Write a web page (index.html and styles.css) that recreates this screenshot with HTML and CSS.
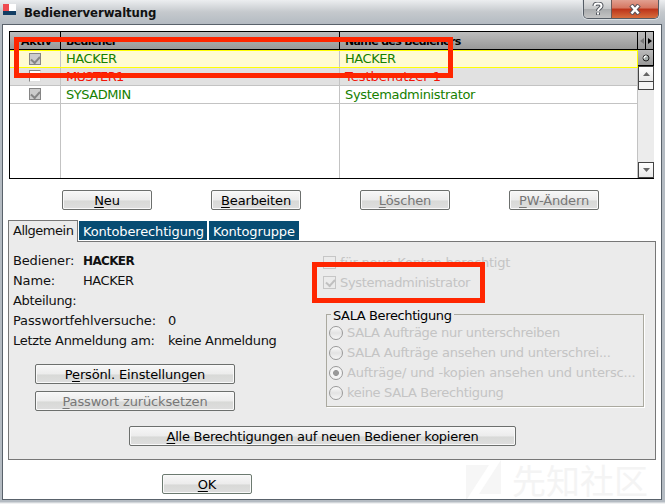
FILE: index.html
```html
<!DOCTYPE html>
<html lang="de">
<head>
<meta charset="utf-8">
<title>Bedienerverwaltung</title>
<link rel="stylesheet" href="styles.css">
</head>
<body>
<div class="window">
  <header class="titlebar">
    <svg class="logo" width="13" height="11"><path fill="#ef4b50" d="M0 0h6v7H0z"/><path fill="#fff" d="M6 0h7v7H6z"/><path fill="#123d63" d="M0 7h13v4H0z"/></svg>
    <h1>Bedienerverwaltung</h1>
    <div class="controls">
      <span class="help"><svg width="12" height="14" fill="none"><path d="M2.5 4C2.5 .8 9.5 .8 9.5 4c0 2.4-3.5 2.2-3.5 5M6 10.5v2.5" stroke="#555960" stroke-width="4"/><path d="M2.5 4C2.5 .8 9.5 .8 9.5 4c0 2.4-3.5 2.2-3.5 5M6 10.5v2" stroke="#fff" stroke-width="2"/></svg></span>
      <span class="close"><svg width="12" height="11" fill="none"><path d="M2 1l8 9M10 1L2 10" stroke="#5b5358" stroke-width="4.6"/><path d="M2.5 1.5l7 8M9.5 1.5l-7 8" stroke="#fff" stroke-width="2.5"/></svg></span>
    </div>
  </header>
  <main class="client">
    <section class="table">
      <div class="grid">
        <div class="row head"><span>Aktiv</span><span>Bediener</span><span>Name des Bedieners</span></div>
        <div class="row selected"><span><i class="tick on"></i></span><span>HACKER</span><span>HACKER</span></div>
        <div class="row alt"><span><i class="tick"></i></span><span class="tight">MUSTER1</span><span class="loose">Testbenutzer 1</span></div>
        <div class="row"><span><i class="tick on"></i></span><span>SYSADMIN</span><span class="sy">Systemadministrator</span></div>
        <div class="row rest"><span></span><span></span><span></span></div>
      </div>
      <div class="side">
        <div class="pager"><span><svg width="4" height="6"><path d="M4 0v6L0 3z" fill="#777"/></svg></span><span><svg width="4" height="6"><path d="M0 0v6l4-3z" fill="#000"/></svg></span></div>
        <div class="knob"><svg width="8" height="8"><circle cx="4" cy="4" r="3" fill="#a5adab" stroke="#222"/><path d="M2 4.5Q2 2 4.5 2" stroke="#fff" fill="none" stroke-width="1.3"/></svg></div>
        <div class="arrow"><svg width="7" height="4"><path d="M0 4h7L3.5 0z" fill="#666"/></svg></div>
        <div class="thumb"></div>
        <div class="track"></div>
        <div class="arrow"><svg width="7" height="4"><path d="M0 0h7L3.5 4z" fill="#666"/></svg></div>
      </div>
    </section>
    <div class="actions">
      <button><span><u>N</u>eu</span></button>
      <button><span><u>B</u>earbeiten</span></button>
      <button class="off"><span><u>L</u>öschen</span></button>
      <button class="off"><span><u>P</u>W-Ändern</span></button>
    </div>
    <nav class="tabs"><span class="tab active">Allgemein</span><span class="tab t2">Kontoberechtigung</span><span class="tab t3">Kontogruppe</span></nav>
    <section class="panel">
      <div class="cols">
        <div class="left">
          <dl>
            <div><dt>Bediener:</dt><dd class="strong">HACKER</dd></div>
            <div><dt>Name:</dt><dd class="name">HACKER</dd></div>
            <div><dt class="ab">Abteilung:</dt><dd></dd></div>
            <div class="wide"><dt>Passwortfehlversuche:</dt><dd>0</dd></div>
            <div class="wide"><dt class="la">Letzte Anmeldung am:</dt><dd class="ka">keine Anmeldung</dd></div>
          </dl>
          <button class="big"><span>P<u>e</u>rsönl. Einstellungen</span></button>
          <button class="big off"><span><u>P</u>asswort zurücksetzen</span></button>
        </div>
        <div class="right">
          <div class="check"><i class="box"></i><span class="fn">für neue Konten berechtigt</span></div>
          <div class="check"><i class="box on"></i><span class="sy">Systemadministrator</span></div>
          <fieldset>
            <legend>SALA Berechtigung</legend>
            <div class="radios">
              <div class="radio"><i></i><span class="r1">SALA Aufträge nur unterschreiben</span></div>
              <div class="radio"><i></i><span class="r2">SALA Aufträge ansehen und unterschrei...</span></div>
              <div class="radio"><i class="on"></i><span>Aufträge/ und -kopien ansehen und untersc...</span></div>
              <div class="radio"><i></i><span class="r4">keine SALA Berechtigung</span></div>
            </div>
          </fieldset>
        </div>
      </div>
      <button class="copy"><span><u>A</u>lle Berechtigungen auf neuen Bediener kopieren</span></button>
    </section>
    <button class="ok"><span><u>O</u>K</span></button>
  </main>
  <div class="mark mark-row"></div>
  <div class="mark mark-admin"></div>
  <div class="watermark"><svg width="36" height="40"><path fill="#f6f6f6" d="M0 5h23L1 39H0zM35 0v34H13z"/></svg><span>先知社区</span></div>
</div>
</body>
</html>
```
FILE: styles.css
```css
* { box-sizing: border-box; }
body { margin: 0; font: 13px/18px "DejaVu Sans", sans-serif; color: #111; letter-spacing: -0.15px; }
span, dt, dd, legend { white-space: nowrap; }
svg { display: block; }
.window { position: relative; width: 665px; height: 504px; overflow: hidden; padding: 0 3px 4px 2px; background: linear-gradient(#eceef0, #c5c9cd 12px, #b4bbc2 24px, #b4bbc2 502px, #f0f1f2 503px); }
.titlebar { height: 24px; display: flex; align-items: flex-start; }
.logo { margin-top: 4px; margin-left: 1px; }
h1 { margin: 4px 0 0 8px; font: bold 13px/17px "DejaVu Sans Condensed", "DejaVu Sans", sans-serif; letter-spacing: -0.08px; }
.controls { margin: 0 3px 0 auto; display: flex; width: 76px; height: 19px; border: 1px solid #555c65; border-top: 0; border-radius: 0 0 5px 5px; overflow: hidden; box-shadow: 0 0 0 1px #d9dde1; }
.controls span { display: flex; justify-content: center; align-items: center; }
.help { width: 28px; background: linear-gradient(#e3e3e3, #c4c6c8 50%, #aaacae 52%, #c4c4c4); border-right: 1px solid #6d5a58; }
.close { flex: 1; background: linear-gradient(#e1a090, #d57660 45%, #bc3319 50%, #d76d3d); }
.client { height: 476px; border: 1px solid #59626b; background: #fff; padding: 6px 7px 0 5px; }
.table { display: flex; width: 645px; height: 148px; margin-left: 1px; border: solid #000; border-width: 1px 0 1px 1px; }
.grid { width: 628px; display: flex; flex-direction: column; }
.row { height: 18px; display: grid; grid-template-columns: 51px 279px 298px; line-height: 17px; color: #168000; border-bottom: 1px solid #c3c3c3; letter-spacing: -0.45px; }
.row > span { border-right: 1px solid #c3c3c3; padding-left: 5px; overflow: hidden; }
.row > span:first-child { padding-left: 19px; padding-top: 2px; }
.row.head { background: linear-gradient(#bdbdbd, #999); border-color: #000; color: #000; font: bold 11px/19px "DejaVu Sans", sans-serif; letter-spacing: -0.65px; }
.row.head > span { border-color: #000; }
.row.head > span:first-child { padding: 0 0 0 11px; letter-spacing: -0.3px; }
.row.selected { background: #fffbd1; border: solid #ff0; border-width: 1px 0; line-height: 16px; }
.row.selected > span:first-child { padding-top: 2px; }
.row.selected > span:last-child { border-color: #ff0; }
.row.alt { background: #e1e1e1; color: #f21207; }
.row.rest { flex: 1; border: 0; }
.row .tight { letter-spacing: -0.7px; }
.row .loose { letter-spacing: 0; }
.tick { display: block; width: 12px; height: 12px; background: #fff; border: 1px solid #858585; border-right-color: #ddd; border-bottom-color: #ddd; }
.tick.on { background: #ccc; border-color: #858585; }
.tick.on::after, .box.on::after { content: ""; display: block; width: 7px; height: 4px; margin: 2px 0 0 1px; border: solid #858585; border-width: 0 0 2px 2px; transform: rotate(-48deg); }
.side { width: 16px; display: flex; flex-direction: column; }
.pager { height: 18px; display: flex; background: linear-gradient(#bdbdbd, #999); border-bottom: 1px solid #000; }
.pager span { width: 8px; display: flex; align-items: center; justify-content: center; border-right: 1px solid #000; }
.knob { height: 16px; display: flex; align-items: center; justify-content: center; background: linear-gradient(#bbb, #999); border: solid #000; border-width: 0 1px 1px 0; }
.arrow { height: 16px; display: flex; align-items: center; justify-content: center; background: linear-gradient(#fff, #e8e8e8); border: 1px solid #444; }
.thumb { height: 8px; background: #f5f5f5; border: solid #444; border-width: 0 1px 1px; }
.track { flex: 1; background: #ececec; }
button { display: flex; align-items: center; justify-content: center; width: 90px; height: 20px; padding: 0; border: 1px solid #6c6f6d; border-radius: 2px; background: linear-gradient(#f7f7f7, #ececec 50%, #d8d9d7 55%, #dedede); box-shadow: inset 0 0 0 1px #f9f9f9; font: inherit; letter-spacing: inherit; color: #000; }
button span { position: relative; top: 1px; }
button.off { color: #777; }
u { text-decoration-thickness: 1px; text-underline-offset: 2px; }
.actions { display: flex; gap: 59px; margin: 11px 0 0 54px; }
.actions button { flex-shrink: 0; }
.tabs { display: flex; align-items: flex-end; height: 31px; position: relative; }
.tab { height: 19px; margin-bottom: 1px; background: #074c73; color: #fff; line-height: 22px; padding-left: 4px; }
.tab.active { width: 70px; height: 22px; margin: 0 1px -1px 0; border: 1px solid #777; border-bottom: 0; background: #ebebeb; color: #111; line-height: 20px; letter-spacing: -0.5px; }
.t2 { width: 128px; margin-right: 2px; }
.t3 { width: 90px; }
.panel { width: 648px; height: 219px; border: 1px solid #777; background: #ebebeb; padding: 9px 0 0 4px; }
.cols { display: flex; height: 175px; }
.left { width: 310px; }
dl { margin: 0; }
dl div { display: flex; height: 20px; line-height: 20px; }
dt { width: 70px; }
dd { margin: 0; }
.strong { font: bold 12px/20px "DejaVu Sans", sans-serif; letter-spacing: -0.8px; letter-spacing: -0.65px; }
.name { letter-spacing: -0.45px; }
.ab, .ka { letter-spacing: -0.33px; }
.la { letter-spacing: -0.3px; }
.wide dt { width: 155px; }
.big { width: 200px; margin: 13px 0 0 22px; }
.big + .big { margin-top: 7px; }
.check { display: flex; height: 20px; align-items: center; color: #c4c4c4; padding-top: 1px; }
.box { flex: none; width: 13px; height: 13px; margin-right: 4px; border: 1px solid #c6c6c6; }
.box.on::after { border-color: #c0c0c0; margin-left: 2px; }
.right { width: 325px; padding-top: 1px; }
.fn { letter-spacing: -0.19px; }
.check .sy, .row .sy { letter-spacing: -0.33px; }
fieldset { width: 318px; height: 101px; margin: 14px 0 0 3px; padding: 0 0 0 2px; border: 1px solid #aaa99f; box-shadow: 1px 1px 0 #fff; }
legend { height: 16px; line-height: 19px; margin-left: 2px; padding: 0 2px; color: #000; letter-spacing: -0.38px; }
.radios { padding-top: 1px; }
.radio { display: flex; height: 20px; align-items: center; color: #c4c4c4; }
.radio i { flex: none; width: 14px; height: 14px; margin-right: 4px; border: 1px solid #999; border-radius: 50%; background: linear-gradient(#fafafa, #e3e3e3 50%, #f6f6f6); }
.radio i.on { background: radial-gradient(circle, #999 2.6px, #f4f4f4 3.3px); }
.r1 { letter-spacing: -0.3px; }
.r2 { letter-spacing: -0.23px; }
.r4 { letter-spacing: -0.33px; }
.copy { width: 387px; margin: 0 0 0 116px; letter-spacing: -0.26px; }
.ok { margin: 14px 0 0 154px; border-color: #6c7a70; }
.mark { position: absolute; border: 5px solid #ff2600; }
.mark-row { left: 14px; top: 37px; width: 439px; height: 41px; }
.mark-admin { left: 312px; top: 262px; width: 173px; height: 41px; }
.watermark { position: absolute; left: 466px; top: 460px; display: flex; gap: 10px; align-items: center; font: 34px/36px "Noto Sans CJK SC", sans-serif; letter-spacing: 0; color: #f4f4f4; }
```
